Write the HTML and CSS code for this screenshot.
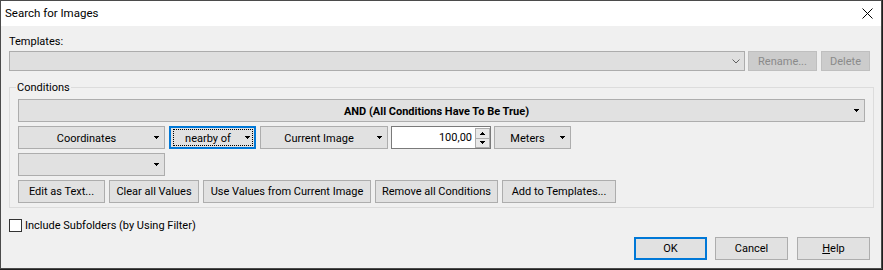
FILE: index.html
```html
<!DOCTYPE html>
<html lang="en">
<head>
<meta charset="UTF-8">
<title>Search for Images</title>
<link rel="stylesheet" href="styles.css">
</head>
<body>
    <div class="window">

        <div class="titlebar">
            <span class="title">Search for Images</span>
            <svg class="close" width="11" height="11" viewBox="0 0 11 11">
                <path d="M0.5 0.5L10.5 10.5M10.5 0.5L0.5 10.5" stroke="#000" stroke-width="1"/>
            </svg>
        </div>

        <div class="client">
            <div class="label">Templates:</div>
            <div class="tpl-row">
                <div class="combo">
                    <svg class="chevron" width="8" height="5" viewBox="0 0 8 5">
                        <path d="M0.5 0.5L4 4L7.5 0.5" fill="none" stroke="#606060" stroke-width="1"/>
                    </svg>
                </div>
                <button class="btn disabled rename">Rename...</button>
                <button class="btn disabled delete">Delete</button>
            </div>

            <fieldset class="group">
                <legend>Conditions</legend>
                <div class="rows">
                    <div class="dd bold">
                        <span class="txt">AND (All Conditions Have To Be True)</span>
                        <svg class="arr" width="5" height="3"><path d="M0 0h5v1h-5zM1 1h3v1h-3zM2 2h1v1h-1z"/></svg>
                    </div>

                    <div class="row">
                        <div class="dd w-coord">
                            <span class="txt">Coordinates</span>
                            <svg class="arr" width="5" height="3"><path d="M0 0h5v1h-5zM1 1h3v1h-3zM2 2h1v1h-1z"/></svg>
                        </div>
                        <div class="dd w-near focus">
                            <span class="txt">nearby of</span>
                            <svg class="arr" width="5" height="3"><path d="M0 0h5v1h-5zM1 1h3v1h-3zM2 2h1v1h-1z"/></svg>
                        </div>
                        <div class="dd w-image">
                            <span class="txt">Current Image</span>
                            <svg class="arr" width="5" height="3"><path d="M0 0h5v1h-5zM1 1h3v1h-3zM2 2h1v1h-1z"/></svg>
                        </div>
                        <div class="spin">
                            <span class="val">100,00</span>
                            <div class="spin-btns">
                                <div class="spin-btn"><svg width="5" height="3"><path d="M2 0h1v1h-1zM1 1h3v1h-3zM0 2h5v1h-5z"/></svg></div>
                                <div class="spin-btn"><svg width="5" height="3"><path d="M0 0h5v1h-5zM1 1h3v1h-3zM2 2h1v1h-1z"/></svg></div>
                            </div>
                        </div>
                        <div class="dd w-unit">
                            <span class="txt">Meters</span>
                            <svg class="arr" width="5" height="3"><path d="M0 0h5v1h-5zM1 1h3v1h-3zM2 2h1v1h-1z"/></svg>
                        </div>
                    </div>

                    <div class="row">
                        <div class="dd w-coord">
                            <span class="txt"></span>
                            <svg class="arr" width="5" height="3"><path d="M0 0h5v1h-5zM1 1h3v1h-3zM2 2h1v1h-1z"/></svg>
                        </div>
                    </div>

                    <div class="row actions">
                        <button class="btn b-edit">Edit as Text...</button>
                        <button class="btn b-clear">Clear all Values</button>
                        <button class="btn b-use">Use Values from Current Image</button>
                        <button class="btn b-remove">Remove all Conditions</button>
                        <button class="btn b-add">Add to Templates...</button>
                    </div>
                </div>
            </fieldset>

            <label class="check">
                <span class="box"></span>
                <span>Include Subfolders (by Using Filter)</span>
            </label>

            <div class="footer">
                <button class="btn dlg default">OK</button>
                <button class="btn dlg cancel">Cancel</button>
                <button class="btn dlg"><u>H</u>elp</button>
            </div>
        </div>

    </div>
</body>
</html>
```

FILE: styles.css
```css
body {
    margin: 0;
    background: #1f1f1f;
    font-family: Roboto, "Noto Sans", sans-serif;
    font-size: 11px;
    line-height: 15px;
    color: #000;
}
.window {
    width: 882px;
    height: 269px;
    box-sizing: border-box;
    border: 1px solid #4b4b4b;
    background: #f0f0f0;
    display: flex;
    flex-direction: column;
}
.titlebar {
    height: 25px;
    flex: none;
    background: #fff;
    display: flex;
    align-items: center;
    justify-content: space-between;
    padding: 0 8px 0 4px;
}
.title {
    font-size: 11.5px;
    margin-top: -1px;
}
.close {
    display: block;
}
.client {
    padding: 7px 11px 0 8px;
}
.label {
    padding-top: 1px;
    height: 14px;
}
.tpl-row {
    display: flex;
    height: 20px;
    margin-top: 3px;
}
.combo {
    width: 736px;
    margin-right: 3px;
    box-sizing: border-box;
    border: 1px solid #acacac;
    background: #dfdfdf;
    display: flex;
    align-items: center;
    justify-content: flex-end;
    padding-right: 4px;
}
.btn {
    font: inherit;
    color: #000;
    height: 23px;
    box-sizing: border-box;
    border: 1px solid #adadad;
    background: #e1e1e1;
    padding: 1px 0 0;
    line-height: 20px;
    text-align: center;
}
.btn.disabled {
    height: 20px;
    line-height: 17px;
    background: #cccccc;
    border-color: #bfbfbf;
    color: #8a8a8a;
}
.rename {
    width: 69px;
    margin-right: 4px;
}
.delete {
    width: 49px;
}
.group {
    margin: 9px 0 0 0;
    width: 865px;
    box-sizing: border-box;
    border: 1px solid #dcdcdc;
    padding: 4px 8px;
    min-width: 0;
}
.group legend {
    padding: 1px 1px 0;
    margin-left: -2px;
    line-height: 14px;
}
.rows {
    display: flex;
    flex-direction: column;
    gap: 4px;
}
.row {
    display: flex;
}
.dd {
    position: relative;
    display: flex;
    align-items: center;
    height: 23px;
    box-sizing: border-box;
    border: 1px solid #adadad;
    background: #e1e1e1;
    padding-right: 5px;
}
.dd .txt {
    flex: 1;
    text-align: center;
    white-space: nowrap;
    padding-top: 1px;
}
.dd .arr {
    display: block;
    flex: none;
}
.bold {
    font-weight: bold;
}
.w-coord {
    width: 147px;
    margin-right: 4px;
}
.w-near {
    width: 87px;
    margin-right: 4px;
}
.w-image {
    width: 128px;
    margin-right: 3px;
}
.w-unit {
    width: 77px;
}
.dd.focus {
    border: 2px solid #0078d7;
    padding-right: 4px;
}
.dd.focus::after {
    content: "";
    position: absolute;
    top: 1px;
    left: 2px;
    right: 1px;
    bottom: 1px;
    border: 1px dotted #000;
}
.spin {
    width: 100px;
    height: 23px;
    margin-right: 3px;
    box-sizing: border-box;
    border: 1px solid #7a7a7a;
    background: #fff;
    display: flex;
}
.spin .val {
    flex: 1;
    text-align: right;
    padding: 1px 3px 0 0;
    line-height: 20px;
}
.spin-btns {
    width: 15px;
    margin-top: 1px;
    height: 20px;
    display: flex;
    flex-direction: column;
    box-sizing: border-box;
    border: 1px solid #adadad;
    background: #e8e8e8;
}
.spin-btn {
    flex: 1;
    display: flex;
    align-items: center;
    justify-content: center;
}
.spin-btn + .spin-btn {
    border-top: 1px solid #adadad;
}
.spin-btn svg {
    display: block;
}
.actions {
    gap: 4px;
}
.b-edit { width: 87px; }
.b-clear { width: 90px; }
.b-use { width: 168px; }
.b-remove { width: 123px; }
.b-add { width: 114px; }
.check {
    display: flex;
    align-items: flex-start;
    margin-top: 10px;
}
.check .box {
    width: 13px;
    height: 13px;
    box-sizing: border-box;
    margin-top: 1px;
    margin-right: 3px;
    border: 1px solid #333;
    background: #fff;
}
.check .box + span {
    padding-top: 1px;
    line-height: 14px;
}
.footer {
    display: flex;
    justify-content: flex-end;
    margin-top: 4px;
}
.dlg {
    width: 73px;
}
.default {
    border: 2px solid #0078d7;
    line-height: 18px;
    margin-right: 8px;
}
.cancel {
    margin-right: 9px;
}
```
